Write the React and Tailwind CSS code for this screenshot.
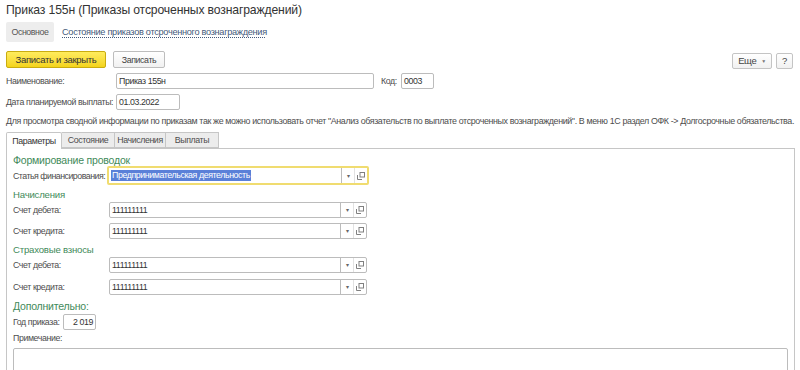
import React from "react";

const FONT = { fontFamily: "'Liberation Sans', Arial, sans-serif" };

function CopyIcon() {
  return (
    <svg width="8" height="8" viewBox="0 0 8 8" className="block">
      <rect x="3" y="0.5" width="4.5" height="4.5" fill="none" stroke="#808080" strokeWidth="1" />
      <path d="M0.5 3 V7.5 H5" fill="none" stroke="#808080" strokeWidth="1" />
    </svg>
  );
}

function SelectField({ value, width, yellow, selected }) {
  return (
    <div
      className={
        "flex items-stretch bg-white rounded-[2px] " +
        (yellow ? "h-[19px] border-2 border-[#f0dc70]" : "h-[16px] border border-[#bcbcbc]")
      }
      style={{ width }}
    >
      <div className="flex-1 flex items-center pl-[2px] overflow-hidden whitespace-nowrap">
        {selected ? (
          <span className="bg-[#5a80d8] text-white px-[1px] leading-[11px]">{value}</span>
        ) : (
          <span className="text-[#333]">{value}</span>
        )}
      </div>
      <div className="w-[13px] border-l border-[#bcbcbc] flex items-center justify-center text-[#666] text-[6px]">▾</div>
      <div className="w-[13px] border-l border-[#e2e2e2] flex items-center justify-center">
        <CopyIcon />
      </div>
    </div>
  );
}

function GreenTitle({ children, big, className = "" }) {
  return (
    <div className={"text-[#3f8a5a] whitespace-nowrap tracking-[-0.2px] " + (big ? "text-[10.5px] " : "text-[9.6px] ") + className}>{children}</div>
  );
}

export default function App() {
  return (
    <div style={FONT} className="w-[800px] h-[370px] overflow-hidden bg-white text-[8.8px] tracking-[-0.4px] text-[#4d4d4d] leading-[12px]">
      {/* Title */}
      <div className="h-[22px] pl-[6px] pt-[3px] text-[12.2px] tracking-[-0.15px] leading-[15px] text-[#333] whitespace-nowrap">
        Приказ 155н (Приказы отсроченных вознаграждений)
      </div>

      {/* Nav */}
      <div className="flex items-center pl-[6px] h-[20px]">
        <div className="w-[48px] h-[20px] bg-[#ededed] rounded-[2px] flex items-center justify-center text-[#555]">
          Основное
        </div>
        <div className="ml-[8px] text-[9.2px] tracking-[-0.3px] text-[#44597a] underline decoration-dotted underline-offset-2 whitespace-nowrap">
          Состояние приказов отсроченного вознаграждения
        </div>
      </div>

      {/* Buttons */}
      <div className="flex items-center mt-[9px] pl-[6px] pr-[7px] h-[17px]">
        <div className="w-[100px] h-[17px] rounded-[2px] border border-[#c9ac10] bg-gradient-to-b from-[#ffec5c] to-[#f4d417] flex items-center justify-center text-[#333] text-[9.5px] tracking-[-0.3px] whitespace-nowrap">
          Записать и закрыть
        </div>
        <div className="ml-[7px] w-[52px] h-[17px] rounded-[2px] border border-[#bdbdbd] bg-gradient-to-b from-white to-[#f1f1f1] flex items-center justify-center text-[#444]">
          Записать
        </div>
        <div className="ml-auto w-[40px] h-[16px] mt-[2px] rounded-[2px] border border-[#c4c4c4] bg-gradient-to-b from-white to-[#f1f1f1] flex items-center justify-center gap-[5px] text-[#444] text-[9.5px]">
          <span>Еще</span>
          <span className="text-[5px] text-[#777]">▼</span>
        </div>
        <div className="ml-[4px] w-[17px] h-[16px] mt-[2px] rounded-[2px] border border-[#c4c4c4] bg-gradient-to-b from-white to-[#f1f1f1] flex items-center justify-center text-[#444] text-[9.5px]">
          ?
        </div>
      </div>

      {/* Наименование */}
      <div className="flex items-center mt-[5px] pl-[6px] h-[16px]">
        <div className="w-[110px]">Наименование:</div>
        <div className="w-[258px] h-[16px] border border-[#bcbcbc] rounded-[2px] flex items-center pl-[2px] text-[#333]">
          Приказ 155н
        </div>
        <div className="ml-[7px] w-[20px]">Код:</div>
        <div className="w-[33px] h-[16px] border border-[#bcbcbc] rounded-[2px] flex items-center pl-[2px] text-[#333]">
          0003
        </div>
      </div>

      {/* Дата */}
      <div className="flex items-center mt-[5px] pl-[6px] h-[16px]">
        <div className="w-[110px] whitespace-nowrap">Дата планируемой выплаты:</div>
        <div className="w-[64px] h-[16px] border border-[#bcbcbc] rounded-[2px] flex items-center pl-[2px] text-[#333]">
          01.03.2022
        </div>
      </div>

      {/* Info */}
      <div className="mt-[5px] pl-[6px] h-[12px] whitespace-nowrap text-[8.9px] tracking-[-0.37px]">
        Для просмотра сводной информации по приказам так же можно использовать отчет "Анализ обязательств по выплате отсроченных вознаграждений". В меню 1С раздел ОФК -&gt; Долгосрочные обязательства.
      </div>

      {/* Tabs */}
      <div className="flex mt-[5px] pl-[6px] h-[16px]">
        <div className="w-[56px] h-[17px] border border-b-0 border-[#c6c6c6] bg-white rounded-t-[2px] flex items-center justify-center text-[#333] z-10">
          Параметры
        </div>
        <div className="w-[53px] h-[16px] border border-l-0 border-[#c6c6c6] bg-[#ececec] flex items-center justify-center">
          Состояние
        </div>
        <div className="w-[51px] h-[16px] border border-l-0 border-[#c6c6c6] bg-[#ececec] flex items-center justify-center">
          Начисления
        </div>
        <div className="w-[53px] h-[16px] border border-l-0 border-[#c6c6c6] bg-[#ececec] flex items-center justify-center">
          Выплаты
        </div>
      </div>

      {/* Panel */}
      <div className="ml-[6px] mr-[5px] h-[230px] border border-[#c6c6c6] border-b-0 pl-[6px] pr-[6px]">
        <GreenTitle big className="mt-[5px] h-[12px] leading-[12px]">Формирование проводок</GreenTitle>

        <div className="flex items-center h-[19px]">
          <div className="w-[94px] whitespace-nowrap tracking-[-0.5px]">Статья финансирования:</div>
          <SelectField value="Предпринимательская деятельность" width={262} yellow selected />
        </div>

        <GreenTitle className="mt-[4px] h-[12px]">Начисления</GreenTitle>
        <div className="flex items-center mt-[1px] h-[16px]">
          <div className="w-[96px]">Счет дебета:</div>
          <SelectField value="111111111" width={258} />
        </div>
        <div className="flex items-center mt-[5px] h-[16px]">
          <div className="w-[96px]">Счет кредита:</div>
          <SelectField value="111111111" width={258} />
        </div>

        <GreenTitle className="mt-[5px] h-[12px]">Страховые взносы</GreenTitle>
        <div className="flex items-center mt-[1px] h-[16px]">
          <div className="w-[96px]">Счет дебета:</div>
          <SelectField value="111111111" width={258} />
        </div>
        <div className="flex items-center mt-[6px] h-[16px]">
          <div className="w-[96px]">Счет кредита:</div>
          <SelectField value="111111111" width={258} />
        </div>

        <GreenTitle big className="mt-[5px] h-[12px] leading-[12px]">Дополнительно:</GreenTitle>
        <div className="flex items-center mt-[2px] h-[16px]">
          <div className="w-[50px] whitespace-nowrap">Год приказа:</div>
          <div className="w-[33px] h-[16px] border border-[#bcbcbc] rounded-[2px] flex items-center justify-end pr-[2px] text-[#333]">
            2 019
          </div>
        </div>
        <div className="mt-[2px] h-[12px]">Примечание:</div>
        <div className="mt-[4px] h-[40px] border border-[#bcbcbc] rounded-[2px] bg-white"></div>
      </div>
    </div>
  );
}
